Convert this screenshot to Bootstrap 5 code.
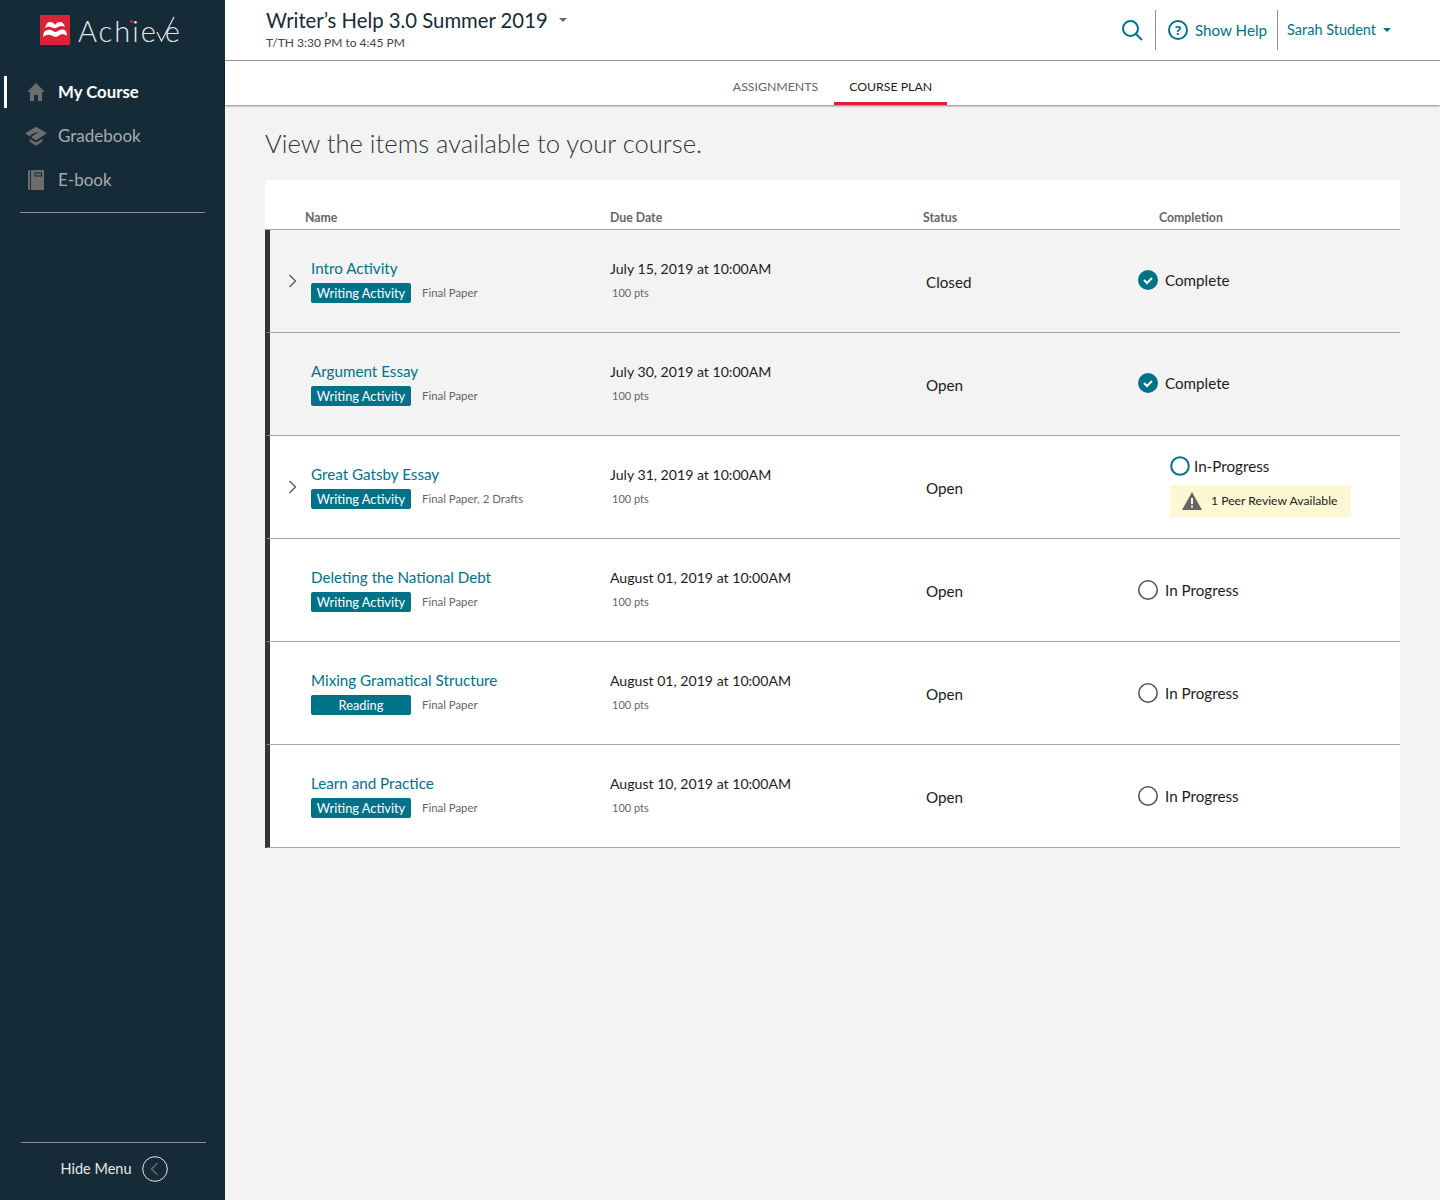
<!DOCTYPE html>
<html lang="en"><head><meta charset="utf-8"><title>Achieve</title>
<link href="https://cdn.jsdelivr.net/npm/bootstrap@5.3.0/dist/css/bootstrap.min.css" rel="stylesheet">
<style>
body{font-family:"Lato","Noto Sans",sans-serif;background:#f3f3f3;color:#1c1c1c;font-size:15.2px;height:1200px;overflow:hidden}
.shell{height:1200px}
.side{width:225px;flex:none;background:#152b37;height:1200px}
.brand{height:60px;padding:15px 0 0 40px;gap:8px;position:relative}
.brand-name{font-weight:300;font-size:29px;line-height:31px;color:#e4e6e7;letter-spacing:2px}
.brand-name svg{vertical-align:baseline;margin:0 -11px 0 -4px}
.brand-dot{position:absolute;left:130px;top:20px;width:3px;height:3px;border-radius:50%;background:#dc2237}
.side-nav{margin:10px 0 0 20px;width:185px;border-bottom:1px solid #8a8f92;padding-bottom:10px}
.side-item{height:44px;margin-left:-20px;padding-left:25px;gap:11px;color:#a9acad;font-size:17px;text-decoration:none;position:relative}
.side-item.on{color:#fff;font-weight:700;font-size:16.800px}
.side-item.on::before{content:"";position:absolute;left:4px;top:6px;width:3px;height:32px;background:#fff}
.side-foot{margin:0 19px 0 21px;border-top:1px solid #8a8f92;height:58px;color:#e8e8e8;font-size:14.500px;gap:10px;padding:0 0 6px 1px}
.main{flex:1;min-width:0}
.topbar{height:61px;background:#fff;border-bottom:1px solid #9a9a9a;padding:0 49px 0 41px}
.course{font-size:20.300px;line-height:26px;color:#152b37;margin-top:7px;gap:11px}
.caret{display:inline-block;border-left:4px solid transparent;border-right:4px solid transparent;border-top:4px solid #666}
.sched{font-size:12px;color:#444;line-height:18px;margin-top:1px}
.tools{color:#007288;font-size:15.200px;height:40px;margin-top:10px}
.tool-sep{border-left:1px solid #8f8f8f;height:40px}
.tool-search{margin-right:12px}
.tool-help{margin:0 7px 0 12px}
.tool-label{margin-right:10px}
.tool-user{margin:0 7px 0 9px;font-size:14.500px}
.tool-caret{border-top-color:#007288}
.tabsbar{height:44px;background:#fff;box-shadow:0 1px 2px rgba(0,0,0,.45)}
.tabby{height:44px;padding:10px 15px 0;font-size:12.300px;color:#666;line-height:32px;text-decoration:none;text-transform:uppercase}
.tabby.on{color:#1c1c1c;border-bottom:3px solid #e11d2e;margin-left:1px}
.pagehead{font-weight:300;font-size:25.600px;line-height:34px;color:#333;margin:21px 0 20px 40px}
.plan{margin:0 40px;background:#fff;width:1135px}
.plan-head{height:50px;border-bottom:1px solid #a5a5a5;font-size:12.300px;font-weight:700;color:#666;padding:29px 0 0 40px;line-height:17px}
.head-a{width:305px}.head-b{width:313px}.head-c{width:236px}
.plan-row{height:103px;border-bottom:1px solid #a5a5a5;border-left:5px solid #333;background:#fff}
.plan-row.done{background:#f3f3f3}
.c-chev{width:41px;flex:none;padding-left:18px;height:16px}
.c-name{width:299px;flex:none}
.c-due{width:316px;flex:none}
.c-stat{width:212px;flex:none;padding-top:2px}
.itemlink{color:#007288;line-height:18px;margin-bottom:6px;text-decoration:none;display:block}
.pill{display:inline-block;width:100px;height:20px;line-height:20px;background:#007288;color:#fff;border-radius:2px;font-size:12.800px;text-align:center}
.meta{font-size:11.400px;color:#666;margin-left:11px}
.due-date{font-size:14.100px;line-height:20px;margin-bottom:4px;color:#1c1c1c}
.pts{font-size:11px;color:#666;margin-left:2px;line-height:20px}
.state{gap:7px;margin-bottom:2px}
.state.todo{margin-bottom:0}
.peerwrap{margin:0 0 2px 32px}
.peer{background:#fdf8d3;height:32px;width:181px;font-size:12.200px;color:#1c1c1c;gap:9px;padding-left:12px;margin-top:8px}
.chev-i{display:block}
</style></head>
<body>
<div class="d-flex shell">
<aside class="side d-flex flex-column">
  <div class="brand d-flex">
    <svg width="30" height="30" viewBox="0 0 30 30"><rect width="30" height="30" fill="#dc2237"/><path d="M5 13C6 10 7 7 10 7 12 7 14 8 15 10 16 8 18 7 20 7 23 7 24 9 25 12 22 10 19 11 17 12.500 15 14 13 13 11 12 9 11 7 11.500 5 13zM4 17C7 14.500 10 14 13 16 15 17.500 17 17 19 15.500 21 14 24 14 26 16L27 21C24 18.500 21 19 18 21 16 22.500 14 22 12 20.500 9 19 6 19.500 3 22z" fill="#fff"/></svg>
    <span class="brand-name">Achie<svg width="22" height="26" viewBox="0 0 22 26"><path d="M3 16l4.500 9L20 1" fill="none" stroke="#e4e6e7" stroke-width="1.200"/></svg>e</span>
    <span class="brand-dot"></span>
  </div>
  <nav class="side-nav">
    <a class="side-item on d-flex align-items-center" href="#"><svg width="22" height="22" viewBox="0 0 22 22"><path d="M11 2 2 11h3v9h4v-6h4v6h4v-9h3z" fill="#6d6d6d"/></svg>My Course</a>
    <a class="side-item d-flex align-items-center" href="#"><svg width="22" height="22" viewBox="0 0 24 22"><path d="M12 1 0 8l5 3.500C7 9 10 7.500 15 7c-3 1.500-6 3-8 5.500l5 3 12-7.500z" fill="#6d6d6d"/><path d="M5 14v3l7 4.500 7-4.500v-3l-7 4z" fill="#6d6d6d"/></svg>Gradebook</a>
    <a class="side-item d-flex align-items-center" href="#"><svg width="22" height="22" viewBox="0 0 22 22"><path d="M3 1h2v20H3zM6 1h13v20H6z" fill="#6d6d6d"/><rect x="10" y="4" width="6.500" height="3" fill="none" stroke="#152b37"/></svg>E-book</a>
  </nav>
  <div class="side-foot mt-auto d-flex align-items-center justify-content-center">Hide Menu
    <svg width="26" height="26" viewBox="0 0 26 26"><circle cx="13" cy="13" r="12.300" fill="none" stroke="#e8e8e8"/><path d="M15.500 7 9.500 13l6 6" fill="none" stroke="#6d6d6d" stroke-width="1.300"/></svg>
  </div>
</aside>
<main class="main">
  <header class="topbar d-flex justify-content-between">
    <div>
      <div class="course d-flex align-items-center">Writer’s Help 3.0 Summer 2019 <span class="caret"></span></div>
      <div class="sched">T/TH 3:30 PM to 4:45 PM</div>
    </div>
    <div class="tools d-flex align-items-center">
      <svg class="tool-search" width="22" height="22" viewBox="0 0 22 22"><circle cx="9.500" cy="9.500" r="7.500" fill="none" stroke="#007288" stroke-width="2"/><path d="m15 15 6 6" stroke="#007288" stroke-width="2"/></svg>
      <span class="tool-sep"></span>
      <svg class="tool-help" width="20" height="20" viewBox="0 0 20 20"><circle cx="10" cy="10" r="9" fill="none" stroke="#007288" stroke-width="2"/><text x="10" y="14.500" text-anchor="middle" font-size="13" font-weight="700" fill="#007288" font-family="Noto Sans">?</text></svg>
      <span class="tool-label">Show Help</span>
      <span class="tool-sep"></span>
      <span class="tool-user">Sarah Student</span><span class="caret tool-caret"></span>
    </div>
  </header>
  <div class="tabsbar d-flex justify-content-center">
    <a class="tabby" href="#">Assignments</a><a class="tabby on" href="#">Course Plan</a>
  </div>
  <h1 class="pagehead">View the items available to your course.</h1>
  <section class="plan">
    <div class="plan-head d-flex"><span class="head-a">Name</span><span class="head-b">Due Date</span><span class="head-c">Status</span><span>Completion</span></div>
    <div class="plan-row done d-flex align-items-center">
      <div class="c-chev"><svg class="chev-i" width="10" height="16" viewBox="0 0 10 16"><path d="m1.500 2 6 6-6 6" fill="none" stroke="#555" stroke-width="1.300"/></svg></div>
      <div class="c-name"><a class="itemlink" href="#">Intro Activity</a><div class="d-flex align-items-center"><span class="pill">Writing Activity</span><span class="meta">Final Paper</span></div></div>
      <div class="c-due"><div class="due-date">July 15, 2019 at 10:00AM</div><div class="pts">100 pts</div></div>
      <div class="c-stat">Closed</div>
      <div class="d-flex align-items-center state"><svg width="20" height="20" viewBox="0 0 20 20"><circle cx="10" cy="10" r="10" fill="#007288"/><path d="m6 10 3 3 5-5" fill="none" stroke="#fff" stroke-width="2"/></svg>Complete</div>
    </div>
    <div class="plan-row done d-flex align-items-center">
      <div class="c-chev"></div>
      <div class="c-name"><a class="itemlink" href="#">Argument Essay</a><div class="d-flex align-items-center"><span class="pill">Writing Activity</span><span class="meta">Final Paper</span></div></div>
      <div class="c-due"><div class="due-date">July 30, 2019 at 10:00AM</div><div class="pts">100 pts</div></div>
      <div class="c-stat">Open</div>
      <div class="d-flex align-items-center state"><svg width="20" height="20" viewBox="0 0 20 20"><circle cx="10" cy="10" r="10" fill="#007288"/><path d="m6 10 3 3 5-5" fill="none" stroke="#fff" stroke-width="2"/></svg>Complete</div>
    </div>
    <div class="plan-row d-flex align-items-center">
      <div class="c-chev"><svg class="chev-i" width="10" height="16" viewBox="0 0 10 16"><path d="m1.500 2 6 6-6 6" fill="none" stroke="#555" stroke-width="1.300"/></svg></div>
      <div class="c-name"><a class="itemlink" href="#">Great Gatsby Essay</a><div class="d-flex align-items-center"><span class="pill">Writing Activity</span><span class="meta">Final Paper, 2 Drafts</span></div></div>
      <div class="c-due"><div class="due-date">July 31, 2019 at 10:00AM</div><div class="pts">100 pts</div></div>
      <div class="c-stat">Open</div>
      <div class="peerwrap">
        <div class="d-flex align-items-center gap-1"><svg width="20" height="20" viewBox="0 0 20 20"><circle cx="10" cy="10" r="8.800" fill="none" stroke="#007288" stroke-width="2"/></svg>In-Progress</div>
        <div class="peer d-flex align-items-center"><svg width="20" height="18" viewBox="0 0 20 18"><path d="M10 0 20 18H0z" fill="#666"/><path d="M9 6h2v6H9zM9 13.500h2v2H9z" fill="#fdf8d3"/></svg>1 Peer Review Available</div>
      </div>
    </div>
    <div class="plan-row d-flex align-items-center">
      <div class="c-chev"></div>
      <div class="c-name"><a class="itemlink" href="#">Deleting the National Debt</a><div class="d-flex align-items-center"><span class="pill">Writing Activity</span><span class="meta">Final Paper</span></div></div>
      <div class="c-due"><div class="due-date">August 01, 2019 at 10:00AM</div><div class="pts">100 pts</div></div>
      <div class="c-stat">Open</div>
      <div class="d-flex align-items-center state todo"><svg width="20" height="20" viewBox="0 0 20 20"><circle cx="10" cy="10" r="9.200" fill="none" stroke="#555" stroke-width="1.600"/></svg>In Progress</div>
    </div>
    <div class="plan-row d-flex align-items-center">
      <div class="c-chev"></div>
      <div class="c-name"><a class="itemlink" href="#">Mixing Gramatical Structure</a><div class="d-flex align-items-center"><span class="pill">Reading</span><span class="meta">Final Paper</span></div></div>
      <div class="c-due"><div class="due-date">August 01, 2019 at 10:00AM</div><div class="pts">100 pts</div></div>
      <div class="c-stat">Open</div>
      <div class="d-flex align-items-center state todo"><svg width="20" height="20" viewBox="0 0 20 20"><circle cx="10" cy="10" r="9.200" fill="none" stroke="#555" stroke-width="1.600"/></svg>In Progress</div>
    </div>
    <div class="plan-row d-flex align-items-center">
      <div class="c-chev"></div>
      <div class="c-name"><a class="itemlink" href="#">Learn and Practice</a><div class="d-flex align-items-center"><span class="pill">Writing Activity</span><span class="meta">Final Paper</span></div></div>
      <div class="c-due"><div class="due-date">August 10, 2019 at 10:00AM</div><div class="pts">100 pts</div></div>
      <div class="c-stat">Open</div>
      <div class="d-flex align-items-center state todo"><svg width="20" height="20" viewBox="0 0 20 20"><circle cx="10" cy="10" r="9.200" fill="none" stroke="#555" stroke-width="1.600"/></svg>In Progress</div>
    </div>
  </section>
</main>
</div>
<script src="https://cdn.jsdelivr.net/npm/bootstrap@5.3.0/dist/js/bootstrap.bundle.min.js"></script>
</body></html>
